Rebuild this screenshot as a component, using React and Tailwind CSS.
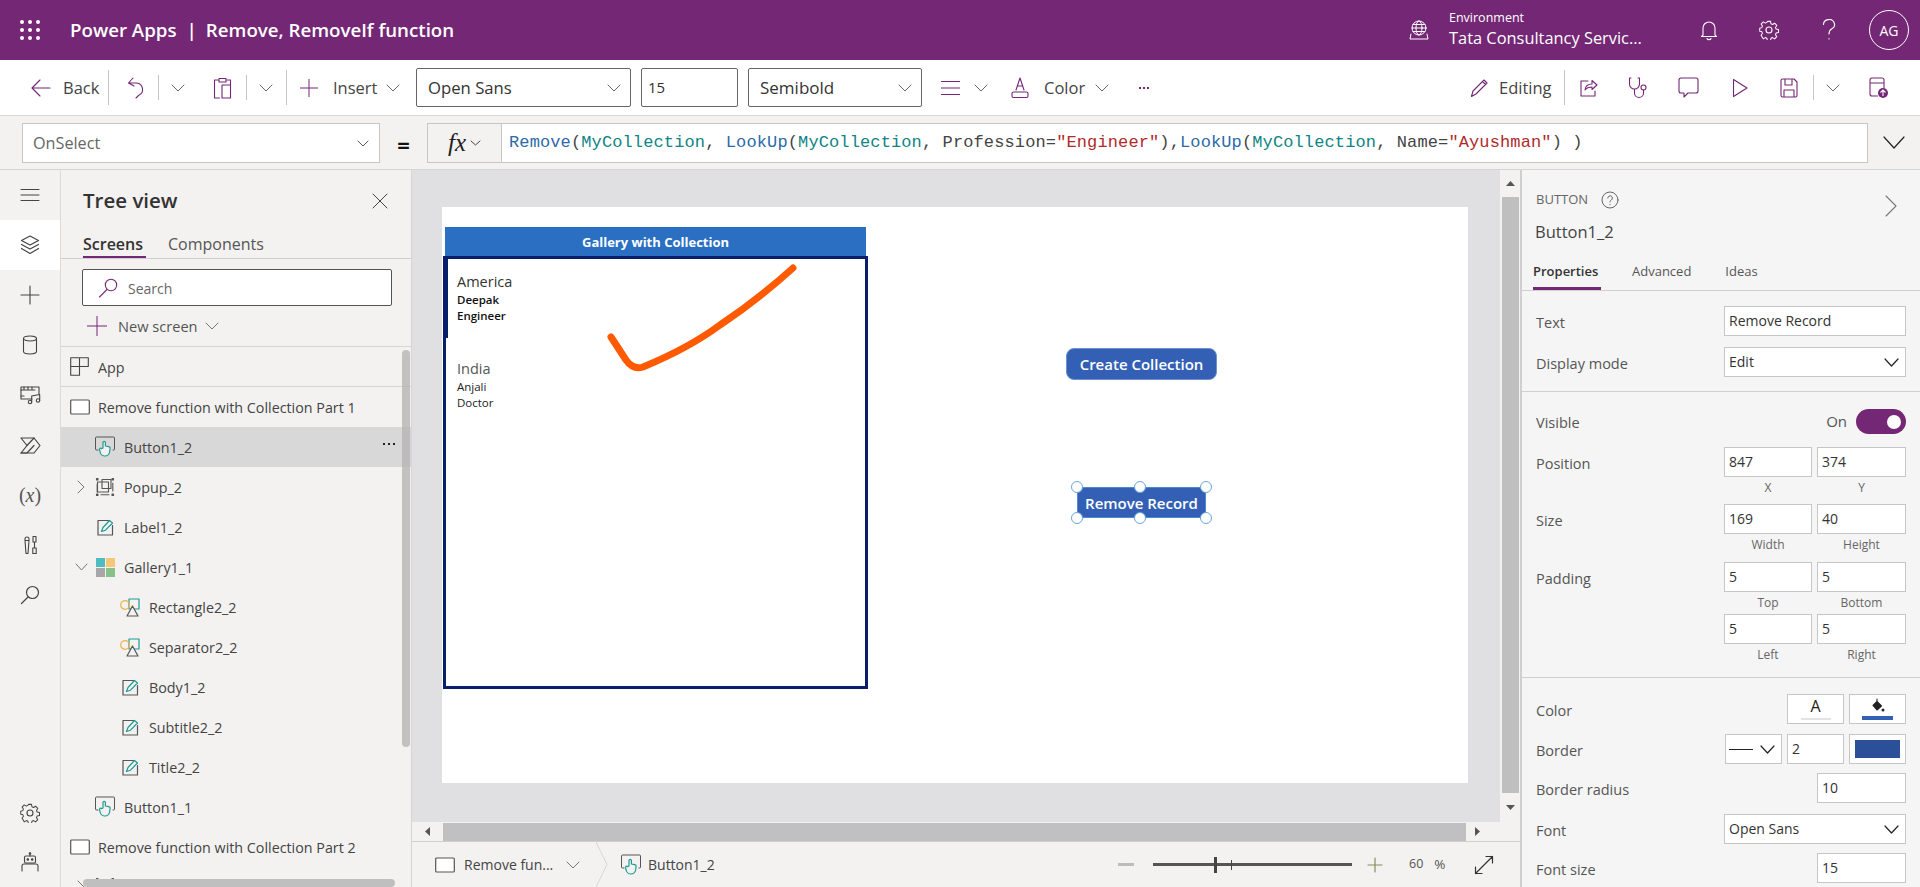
import React from "react";

const P = "#742774";

function S({ w = 20, h = 20, vb, c = P, sw = 1.3, children, className = "" }) {
  return (
    <svg width={w} height={h} viewBox={vb || `0 0 ${w} ${h}`} fill="none" stroke={c} strokeWidth={sw} strokeLinecap="round" strokeLinejoin="round" className={"shrink-0 " + className}>
      {children}
    </svg>
  );
}
const Chev = ({ w = 14, h = 8, c = "#666", sw = 1, className = "" }) => (
  <S w={w} h={h} c={c} sw={sw} className={className}><path d={`M1 1 L${w / 2} ${h - 1} L${w - 1} 1`} /></S>
);
const Sep = ({ h, cls }) => <div className={"w-px shrink-0 bg-[#c8c6c4] " + h + " " + (cls || "")} />;

const ScreenIco = ({ className = "" }) => (
  <S w={20} h={16} c="#555" sw={1.2} className={className}><rect x="0.7" y="1" width="18.6" height="14" rx="1" fill="#fff" /></S>
);
const BtnIco = ({ className = "" }) => (
  <S w={20} h={22} c="#555" sw={1} className={className}>
    <path d="M3 14H1.500a1 1 0 0 1-1-1V2a1 1 0 0 1 1-1h17a1 1 0 0 1 1 1v11a1 1 0 0 1-1 1H18" />
    <path d="M8 12V6.500a1.200 1.200 0 0 1 2.400 0V10l3.400.6c1 .2 1.400 1 1.300 1.900l-.5 3.500a5 5 0 0 1-5.200 4 5 5 0 0 1-4.300-4l-.6-2.600a1.100 1.100 0 0 1 2-.8Z" stroke="#1e9a94" strokeWidth="1.200" fill="#f3f2f1" />
  </S>
);
const PopupIco = () => (
  <S w={20} h={20} c="#555" sw={1.1}>
    <rect x="1.500" y="1.500" width="1.500" height="1.500" fill="#555" /><rect x="17" y="1.500" width="1.500" height="1.500" fill="#555" />
    <rect x="1.500" y="17" width="1.500" height="1.500" fill="#555" /><rect x="17" y="17" width="1.500" height="1.500" fill="#555" />
    <rect x="2.500" y="5" width="11" height="10" /><rect x="7" y="2.500" width="9" height="9" />
    <path d="M2.200 7v8M17.800 6v8M6 17.800h8" />
  </S>
);
const LabelIco = () => (
  <S w={17} h={17} c="#555" sw={1.2}>
    <path d="M11.500 1.500H1v14.500h14.500V6.500" />
    <path d="M4.500 12.500 6 8.500 12.500 1.500 15.500 4 8.500 11.200Z" stroke="#1e9a94" strokeWidth="1.200" fill="#f3f2f1" />
  </S>
);
const GalleryIco = () => (
  <svg width="19" height="19" viewBox="0 0 19 19" className="shrink-0">
    <rect width="9" height="9" fill="#4fbcc0" /><rect x="10" width="9" height="9" fill="#f8c678" />
    <rect y="10" width="9" height="9" fill="#a8a6a6" /><rect x="10" y="10" width="9" height="9" fill="#84c28a" />
  </svg>
);
const ShapeIco = () => (
  <S w={20} h={19} c="#555" sw={1.2}>
    <rect x="9" y="1" width="10" height="10" stroke="#1e9a94" />
    <circle cx="5" cy="7" r="4.300" stroke="#eeb04a" />
    <path d="M7 18 12.500 8 18 18Z" fill="#f3f2f1" />
  </S>
);

function Row({ children, pl, active, more }) {
  return (
    <div className={"flex h-[40px] items-center text-[14.300px] text-[#444] " + pl + " " + (active ? "bg-[#d9d8d8]" : "")}>
      {children}
      {more && <span className="ml-auto mr-[16px] mb-[6px] flex gap-[3px]"><i className="size-[2px] bg-[#222]" /><i className="size-[2px] bg-[#222]" /><i className="size-[2px] bg-[#222]" /></span>}
    </div>
  );
}
const RowText = ({ children, ml }) => <span className={"whitespace-nowrap pt-[2px] " + ml}>{children}</span>;

const GearPath = "M8.300 1h3.400l.5 2.600 1.700.8 2.300-1.400 2.300 2.400-1.400 2.200.7 1.700 2.600.6v3.200l-2.600.6-.7 1.700 1.400 2.200-2.300 2.400-2.300-1.400-1.700.8-.5 2.500H8.300l-.5-2.500-1.700-.8-2.300 1.400L1.500 16l1.400-2.200-.7-1.700L0 11.600V8.400l2.200-.6.7-1.700L1.500 3.900 3.800 1.500 6.100 2.900l1.700-.8Z";

function Rail() {
  const c = "#444";
  const items = [
    <S w={20} h={14} c={c} sw={1}><path d="M1 1.500h18M1 7h18M1 12.500h18" /></S>,
    <S w={20} h={20} c={c} sw={1.2}><path d="M10 1 18.500 5.500 10 10 1.500 5.500Z" /><path d="M1.500 9.500 10 14l8.500-4.500M1.500 13.500 10 18.500l8.500-5" /></S>,
    <S w={20} h={20} c={c} sw={1.1}><path d="M10 1v18M1 10h18" /></S>,
    <S w={16} h={20} c={c} sw={1.1}><ellipse cx="8" cy="3.500" rx="6.500" ry="2.500" /><path d="M1.500 3.500v13c0 1.400 2.900 2.500 6.500 2.500s6.500-1.100 6.500-2.500v-13" /></S>,
    <S w={21} h={20} c={c} sw={1.1}><path d="M12 14H1V2h18v7" /><path d="M1 5h14M4 2v3M8 2v3M12 2v3M1 11h3" /><circle cx="10" cy="17" r="1.700" /><circle cx="18" cy="15.500" r="1.700" /><path d="M11.700 17v-6l8-1.500v6" /></S>,
    <S w={21} h={17} c={c} sw={1.2}><path d="M1 1h13l6 7.500-6 7.500H1l6-7.500Z" /><path d="M7 8.500 14 1M1 16h6l7-7.500" /></S>,
    <span className="font-['Liberation_Serif',serif] text-[20px] font-normal leading-none text-[#555]">(<span className="italic">x</span>)</span>,
    <S w={13} h={20} c={c} sw={1.1}><path d="M1 4a2 2 0 0 1 4 0v1.500H1ZM1 5.500l1 13h2l1-13M9 1.500h3V7H9ZM10.500 7v6M8.800 13h3.400v5.500H8.800Z" /></S>,
    <S w={20} h={20} c={c} sw={1.2}><circle cx="12.500" cy="7.500" r="6" /><path d="M8 12 1.500 18.500" /></S>,
  ];
  return (
    <div className="flex w-[61px] shrink-0 flex-col border-r border-[#dcdbda] bg-[#f3f2f1]">
      {items.map((it, i) => (
        <div key={i} className={"flex h-[50px] items-center justify-center " + (i === 1 ? "bg-white" : "")}>{it}</div>
      ))}
      <div className="mt-auto flex h-[50px] items-center justify-center">
        <S w={20} h={20} c={c} sw={1.1}><circle cx="10" cy="10" r="3" /><path d={GearPath} transform="scale(.92) translate(.8 .5)" /></S>
      </div>
      <div className="flex h-[49px] items-center justify-center pb-[2px]">
        <S w={18} h={20} c={c} sw={1.1}><path d="M9 1v3" /><circle cx="9" cy="1.500" r=".8" /><rect x="3.500" y="4" width="11" height="7" rx="1.500" /><circle cx="6.800" cy="7.500" r=".8" fill={c} /><circle cx="11.200" cy="7.500" r=".8" fill={c} /><path d="M1 19v-5a2 2 0 0 1 2-2h12a2 2 0 0 1 2 2v5" /></S>
      </div>
    </div>
  );
}

function Tree() {
  return (
    <div className="relative w-[351px] shrink-0 overflow-hidden border-r border-[#d6d5d4] bg-[#f3f2f1]">
      <div className="flex h-[62px] items-center justify-between pl-[22px] pr-[23px]">
        <span className="pb-[1px] text-[20.500px] font-semibold text-[#333]">Tree view</span>
        <S w={16} h={16} c="#444" sw={1}><path d="M1 1l14 14M15 1 1 15" /></S>
      </div>
      <div className="flex h-[27px] items-start border-b border-[#d0cfce] pl-[22px] text-[16px] leading-[24px]">
        <div className="h-[26px] w-[63px] border-b-[2px] border-[#742774] font-semibold text-[#333]">Screens</div>
        <div className="ml-[22px] text-[#555]">Components</div>
      </div>
      <div className="ml-[21px] mt-[10px] flex h-[37px] w-[310px] items-center rounded-[2px] border border-[#555] bg-white pl-[15px]">
        <S w={20} h={20} c={P} sw={1.1}><circle cx="13" cy="7" r="5.700" /><path d="M9 11.500 1.500 19" /></S>
        <span className="ml-[10px] pt-[1px] text-[14px] text-[#666]">Search</span>
      </div>
      <div className="flex h-[41px] items-center border-b border-[#d6d5d4] pl-[26px]">
        <S w={20} h={20} c={P} sw={1}><path d="M10 0v20M0 10h20" /></S>
        <span className="ml-[11px] pt-[1px] text-[14.600px] text-[#555]">New screen</span>
        <Chev c="#777" className="ml-[7px]" />
      </div>
      <div className="flex h-[40px] items-center border-b border-[#d6d5d4] pl-[9px] text-[14.300px] text-[#444]">
        <S w={19} h={19} c="#444" sw={1.1}><path d="M.7.700h8.800v8.800H.7ZM9.500.700h8.800v8.800H9.500M.7 9.500v8.800h8.800V9.500" /></S>
        <span className="ml-[9px] pt-[2px]">App</span>
      </div>
      <Row pl="pl-[9px]"><ScreenIco /><RowText ml="ml-[8px]">Remove function with Collection Part 1</RowText></Row>
      <Row pl="pl-[34px]" active more><BtnIco /><RowText ml="ml-[9px]">Button1_2</RowText></Row>
      <Row pl="pl-[16px]"><S w={8} h={14} c="#777" sw={1}><path d="M1 1l6 6-6 6" /></S><span className="ml-[10px]"><PopupIco /></span><RowText ml="ml-[9px]">Popup_2</RowText></Row>
      <Row pl="pl-[36px]"><LabelIco /><RowText ml="ml-[10px]">Label1_2</RowText></Row>
      <Row pl="pl-[14px]"><Chev c="#777" w={13} /><span className="ml-[8px]"><GalleryIco /></span><RowText ml="ml-[9px]">Gallery1_1</RowText></Row>
      <Row pl="pl-[59px]"><ShapeIco /><RowText ml="ml-[9px]">Rectangle2_2</RowText></Row>
      <Row pl="pl-[59px]"><ShapeIco /><RowText ml="ml-[9px]">Separator2_2</RowText></Row>
      <Row pl="pl-[61px]"><LabelIco /><RowText ml="ml-[10px]">Body1_2</RowText></Row>
      <Row pl="pl-[61px]"><LabelIco /><RowText ml="ml-[10px]">Subtitle2_2</RowText></Row>
      <Row pl="pl-[61px]"><LabelIco /><RowText ml="ml-[10px]">Title2_2</RowText></Row>
      <Row pl="pl-[34px]"><BtnIco /><RowText ml="ml-[9px]">Button1_1</RowText></Row>
      <Row pl="pl-[9px]"><ScreenIco /><RowText ml="ml-[8px]">Remove function with Collection Part 2</RowText></Row>
      <Row pl="pl-[16px]"><S w={8} h={14} c="#777" sw={1}><path d="M1 1l6 6-6 6" /></S><span className="ml-[10px]"><PopupIco /></span><RowText ml="ml-[9px]">Popup</RowText></Row>
      <div className="absolute left-[341px] top-[180px] h-[397px] w-[8px] rounded-[4px] bg-[#b5b4b4]/80" />
      <div className="absolute left-[22px] top-[709px] h-[8px] w-[312px] rounded-[4px] bg-[#c0bfc0]" />
    </div>
  );
}

const Handle = ({ cls }) => <span className={"absolute size-[12px] rounded-full border-[1.500px] border-[#6aa5dc] bg-white " + cls} />;

function Canvas() {
  return (
    <div className="flex-1 bg-[#e0dfe1] pl-[30px] pt-[37px]">
      <div className="relative h-[576px] w-[1026px] bg-white">
        <div className="absolute left-[3px] top-[20px] flex h-[30px] w-[421px] items-center justify-center bg-[#2a6fc2] pt-[1px] text-[13px] font-bold text-white">Gallery with Collection</div>
        <div className="absolute left-[1px] top-[49px] h-[433px] w-[425px] border-[3px] border-[#0a1f6b] pl-[11px] pt-[13px]">
          <div className="absolute -left-[1px] top-0 h-[79px] w-[3px] bg-[#0a1f6b]" />
          <div className="text-[14.500px] leading-[20px] text-[#333]">America</div>
          <div className="text-[11.500px] font-semibold leading-[16px] text-[#111]">Deepak</div>
          <div className="text-[11.500px] font-semibold leading-[16px] text-[#111]">Engineer</div>
          <div className="mt-[35px] text-[14.500px] leading-[20px] text-[#555]">India</div>
          <div className="text-[11.500px] leading-[16px] text-[#222]">Anjali</div>
          <div className="text-[11.500px] leading-[16px] text-[#222]">Doctor</div>
        </div>
        <svg className="absolute left-[160px] top-[50px]" width="200" height="120" viewBox="0 0 200 120" fill="none">
          <path d="M9 80 L24 103 Q31 113 41 110 C70 98 95 85 118 68 C145 50 170 30 191 11" stroke="#ff5a00" strokeWidth="7" strokeLinecap="round" strokeLinejoin="round" />
        </svg>
        <div className="absolute left-[624px] top-[141px] flex h-[32px] w-[151px] items-center justify-center rounded-[8px] border border-[#6d92cf] bg-[#3360b5] pt-[1px] text-[15px] font-semibold text-white">Create Collection</div>
        <div className="absolute left-[635px] top-[280px] flex h-[31px] w-[129px] items-center justify-center border-[1.500px] border-[#4b88d4] bg-[#3360b5] pt-[1px] text-[15px] font-semibold text-white">
          Remove Record
          <Handle cls="-left-[7px] -top-[7px]" /><Handle cls="left-[56px] -top-[7px]" /><Handle cls="-right-[7px] -top-[7px]" />
          <Handle cls="-left-[7px] -bottom-[7px]" /><Handle cls="left-[56px] -bottom-[7px]" /><Handle cls="-right-[7px] -bottom-[7px]" />
        </div>
      </div>
    </div>
  );
}

const Box = ({ w, v, chev, cls = "" }) => (
  <div className={"flex h-[30px] items-center justify-between border border-[#c8c6c4] bg-white pl-[4px] pr-[6px] text-[14px] leading-none text-[#333] " + w + " " + cls}>
    <span>{v}</span>
    {chev && <Chev w={15} h={9} c="#222" sw={1.2} />}
  </div>
);
const Lbl = ({ children }) => <span className="pt-[3px] text-[14.500px] text-[#555]">{children}</span>;
const Cap = ({ w, children }) => <div className={"pt-[1px] text-center text-[12px] leading-[19px] text-[#666] " + w}>{children}</div>;
const PRow = ({ label, mt, children }) => (
  <div className={"flex items-center justify-between " + (mt || "")}>
    <Lbl>{label}</Lbl>
    <div className="flex gap-[5px]">{children}</div>
  </div>
);

function Props() {
  return (
    <div className="w-[400px] shrink-0 border-l-2 border-[#d0cfce] bg-[#f5f5f5]">
      <div className="flex items-start justify-between pl-[14px] pr-[23px] pt-[20px]">
        <div>
          <div className="flex h-[20px] items-center text-[13px] text-[#666]">
            BUTTON
            <S w={18} h={18} c="#666" sw={1} className="ml-[13px]"><circle cx="9" cy="9" r="8" /><path d="M6.800 7a2.300 2.300 0 1 1 3.500 2c-.9.6-1.300 1-1.300 2M9 13.500v.2" /></S>
          </div>
          <div className="-ml-[1px] mt-[10px] text-[16.500px] leading-[24px] text-[#444]">Button1_2</div>
        </div>
        <S w={12} h={22} c="#777" sw={1.1} className="mt-[5px]"><path d="M1 1l10 10L1 21" /></S>
      </div>
      <div className="mt-[14px] flex h-[33px] items-start border-b border-[#d0cfce] pl-[11px] text-[13px] leading-[26px]">
        <div className="h-[32px] w-[68px] border-b-[3px] border-[#742774] font-semibold text-[#333]">Properties</div>
        <div className="ml-[31px] text-[#555]">Advanced</div>
        <div className="ml-[34px] text-[#555]">Ideas</div>
      </div>
      <div className="border-b border-[#d0cfce] pb-[14px] pl-[14px] pr-[14px] pt-[15px]">
        <PRow label="Text"><Box w="w-[182px]" v="Remove Record" /></PRow>
        <PRow label="Display mode" mt="mt-[11px]"><Box w="w-[182px]" v="Edit" chev /></PRow>
      </div>
      <div className="border-b border-[#d0cfce] pb-[13px] pl-[14px] pr-[14px] pt-[17px]">
        <div className="flex h-[25px] items-center justify-between">
          <Lbl>Visible</Lbl>
          <div className="flex items-center">
            <span className="text-[15px] text-[#555]">On</span>
            <div className="ml-[9px] flex h-[25px] w-[50px] items-center justify-end rounded-full bg-[#742774] pr-[5px]"><div className="size-[14px] rounded-full bg-white" /></div>
          </div>
        </div>
        <PRow label="Position" mt="mt-[13px]"><Box w="w-[88px]" v="847" /><Box w="w-[89px]" v="374" /></PRow>
        <div className="flex justify-end gap-[5px]"><Cap w="w-[88px]">X</Cap><Cap w="w-[89px]">Y</Cap></div>
        <PRow label="Size" mt="mt-[7px]"><Box w="w-[88px]" v="169" /><Box w="w-[89px]" v="40" /></PRow>
        <div className="flex justify-end gap-[5px]"><Cap w="w-[88px]">Width</Cap><Cap w="w-[89px]">Height</Cap></div>
        <PRow label="Padding" mt="mt-[8px]"><Box w="w-[88px]" v="5" /><Box w="w-[89px]" v="5" /></PRow>
        <div className="flex justify-end gap-[5px]"><Cap w="w-[88px]">Top</Cap><Cap w="w-[89px]">Bottom</Cap></div>
        <div className="mt-[2px] flex justify-end gap-[5px]"><Box w="w-[88px]" v="5" /><Box w="w-[89px]" v="5" /></div>
        <div className="flex justify-end gap-[5px]"><Cap w="w-[88px]">Left</Cap><Cap w="w-[89px]">Right</Cap></div>
      </div>
      <div className="pl-[14px] pr-[14px] pt-[16px]">
        <PRow label="Color">
          <div className="flex h-[30px] w-[57px] flex-col items-center border border-[#c8c6c4] bg-white">
            <span className="text-[16px] leading-[22px] text-[#222]">A</span>
            <span className="mt-[1px] h-[2px] w-[30px] bg-[#e4e3e3]" />
          </div>
          <div className="flex h-[30px] w-[57px] flex-col items-center border border-[#c8c6c4] bg-white">
            <S w={15} h={15} c="#222" sw={1.1} className="mt-[3px]"><path d="M7 1v3M3 7.500 7 3.500 11.500 8 7 12Z" fill="#222" /><circle cx="13" cy="12" r="1.500" fill="#222" stroke="none" /></S>
            <span className="mt-[3px] h-[4px] w-[31px] bg-[#3360b5]" />
          </div>
        </PRow>
        <PRow label="Border" mt="mt-[10px]">
          <div className="flex h-[30px] w-[57px] items-center justify-between border border-[#c8c6c4] bg-white pl-[3px] pr-[6px]">
            <span className="h-px w-[24px] bg-[#222]" /><Chev w={15} h={9} c="#222" sw={1.2} />
          </div>
          <Box w="w-[57px]" v="2" />
          <div className="flex h-[30px] w-[57px] items-center justify-center border border-[#c8c6c4] bg-white"><span className="h-[18px] w-[45px] bg-[#2b5097]" /></div>
        </PRow>
        <PRow label="Border radius" mt="mt-[9px]"><Box w="w-[89px]" v="10" /></PRow>
        <PRow label="Font" mt="mt-[11px]"><Box w="w-[182px]" v="Open Sans" chev /></PRow>
        <PRow label="Font size" mt="mt-[9px]"><Box w="w-[89px]" v="15" /></PRow>
      </div>
    </div>
  );
}

const Tri = ({ d }) => {
  const p = { u: "M0 5 4.500 0 9 5Z", d: "M0 0 4.500 5 9 0Z", l: "M5 0 0 4.500 5 9Z", r: "M0 0 5 4.500 0 9Z" }[d];
  const vert = d === "u" || d === "d";
  return <svg width={vert ? 9 : 5} height={vert ? 5 : 9} viewBox={vert ? "0 0 9 5" : "0 0 5 9"} className="shrink-0"><path d={p} fill="#555" /></svg>;
};

function Center() {
  return (
    <div className="flex w-[1108px] shrink-0 flex-col">
      <div className="flex h-[652px]">
        <Canvas />
        <div className="flex w-[20px] flex-col items-center bg-[#f3f2f1]">
          <div className="flex h-[27px] w-full items-center justify-center"><Tri d="u" /></div>
          <div className="h-[596px] w-[17px] bg-[#bfbfc0]" />
          <div className="flex h-[29px] w-full items-center justify-center"><Tri d="d" /></div>
        </div>
      </div>
      <div className="flex h-[20px] items-center border-b border-[#d0cfce] bg-[#f3f2f1]">
        <div className="flex w-[31px] justify-center"><Tri d="l" /></div>
        <div className="h-[18px] w-[1023px] bg-[#c0bfc2]" />
        <div className="flex w-[54px] justify-center pr-[32px]"><Tri d="r" /></div>
      </div>
      <div className="flex h-[45px] items-center bg-[#f3f2f1] text-[14px] text-[#444]">
        <ScreenIco className="ml-[23px]" />
        <span className="ml-[9px] w-[99px] whitespace-nowrap">Remove fun...</span>
        <Chev c="#777" className="ml-[3px]" />
        <svg width="12" height="45" viewBox="0 0 12 45" fill="none" className="ml-[16px] shrink-0"><path d="M0 0 11 22.500 0 45" stroke="#d6d5d4" /></svg>
        <BtnIco className="ml-[13px]" />
        <span className="ml-[7px] w-[71px]">Button1_2</span>
        <span className="ml-[399px] h-[3px] w-[16px] bg-[#bdbcbb]" />
        <div className="relative ml-[19px] flex h-[20px] w-[199px] items-center">
          <div className="h-[3px] w-full bg-[#555]" />
          <div className="absolute left-[61px] top-[2px] h-[16px] w-[3px] bg-[#444]" />
          <div className="absolute left-[78px] top-[5px] h-[10px] w-px bg-[#444]" />
        </div>
        <S w={16} h={16} c="#8a8a5c" sw={1.2} className="ml-[15px]"><path d="M8 1v14M1 8h14" /></S>
        <span className="ml-[26px] text-[12.500px] text-[#555]">60</span>
        <span className="ml-[11px] text-[13.500px] text-[#555]">%</span>
        <S w={20} h={20} c="#333" sw={1.2} className="ml-[29px]"><path d="M1.500 18.500 18.500 1.500M12 1.500h6.500V8M1.500 12v6.500H8" /></S>
      </div>
    </div>
  );
}

export default function App() {
  return (
    <div className="flex h-[887px] w-[1920px] flex-col overflow-hidden bg-white font-['Open_Sans',sans-serif]">
      <header className="flex h-[60px] shrink-0 items-center bg-[#742774] text-white">
        <svg width="20" height="20" viewBox="0 0 20 20" className="ml-[20px] shrink-0" fill="#fff">
          {[2, 10, 18].flatMap((y) => [2, 10, 18].map((x) => <circle key={x + "-" + y} cx={x} cy={y} r="2" />))}
        </svg>
        <span className="ml-[30px] pt-[1px] text-[18.700px] font-semibold">Power Apps</span>
        <span className="ml-[10px] pt-[1px] text-[18.700px] font-semibold">|</span>
        <span className="ml-[9px] pt-[1px] text-[18.700px] font-semibold">Remove, RemoveIf function</span>
        <S w={20} h={20} c="#fff" sw={1} className="ml-auto"><circle cx="10" cy="8" r="7" /><ellipse cx="10" cy="8" rx="3" ry="7" /><path d="M3 8h14M4 4.500h12M4 11.500h12M2 14l-1 5h18l-1-5" /></S>
        <div className="ml-[20px] w-[251px] leading-none">
          <div className="-mt-[2px] text-[12.500px] leading-[17px]">Environment</div>
          <div className="whitespace-nowrap text-[16.400px] leading-[23px]">Tata Consultancy Servic...</div>
        </div>
        <S w={18} h={21} c="#fff" sw={1.1}><path d="M3 15V8a6 6 0 0 1 12 0v7l1.500 1.500h-15ZM7 18.500c.5 1.500 3.500 1.500 4 0" /></S>
        <S w={20} h={20} c="#fff" sw={1.1} className="ml-[41px]"><circle cx="10" cy="10" r="3" /><path d={GearPath} transform="scale(.92) translate(.8 .5)" /></S>
        <S w={14} h={22} c="#fff" sw={1.1} className="ml-[43px]"><path d="M1.500 5.500a5.500 5 0 1 1 8 4.500c-2 1.200-2.500 2.500-2.500 5M7 19.500v.5" /></S>
        <div className="ml-[33px] mr-[11px] flex size-[40px] items-center justify-center rounded-full border border-white text-[14px]">AG</div>
      </header>

      <div className="flex h-[56px] shrink-0 items-center border-b border-[#d6d5d4] bg-white pl-[31px] pr-[32px] text-[16.500px] text-[#444]">
        <S w={20} h={18} sw={1.1}><path d="M19 9H1M9 1 1 9l8 8" /></S>
        <span className="ml-[12px] w-[45px] pt-[2px]">Back</span>
        <Sep h="h-[35px]" />
        <S w={18} h={22} sw={1.1} className="ml-[18px]"><path d="M6 1 1.500 6 7 9M1.500 6h8a6.500 6.500 0 0 1 2 12.500L9 21" /></S>
        <Sep h="h-[25px]" cls="ml-[13px] bg-[#888]" />
        <Chev className="ml-[12px]" />
        <S w={19} h={22} sw={1.1} className="ml-[28px]"><path d="M5 3H1.500v18h5M14 3h3.500v5M6 3V1.500h7V5H6ZM9 8h8.500v13H9Z" /></S>
        <Sep h="h-[25px]" cls="ml-[14px] bg-[#888]" />
        <Chev className="ml-[12px]" />
        <Sep h="h-[35px]" cls="ml-[13px]" />
        <S w={18} h={18} sw={1} className="ml-[13px]"><path d="M9 0v18M0 9h18" /></S>
        <span className="ml-[15px] w-[50px] pt-[2px]">Insert</span>
        <Chev className="ml-[3px]" />
        <div className="ml-[16px] flex h-[39px] w-[215px] items-center justify-between rounded-[2px] border border-[#666] pl-[11px] pr-[9px] pt-[1px] text-[16.700px] text-[#333]">Open Sans<Chev /></div>
        <div className="ml-[10px] flex h-[39px] w-[97px] items-center rounded-[2px] border border-[#666] pl-[6px] text-[15px] text-[#333]">15</div>
        <div className="ml-[10px] flex h-[39px] w-[174px] items-center justify-between rounded-[2px] border border-[#666] pl-[11px] pr-[9px] pt-[1px] text-[17px] text-[#333]">Semibold<Chev /></div>
        <S w={19} h={16} sw={1} className="ml-[19px]"><path d="M0 1.500h19M0 8h19M0 14.500h19" /></S>
        <Chev className="ml-[14px]" />
        <S w={18} h={21} sw={1.1} className="ml-[23px]"><path d="M5 13 9 1l4 12M6.500 9h5" /><rect x="1" y="15" width="16" height="5.500" rx="1.500" /></S>
        <span className="ml-[15px] w-[50px] pt-[2px]">Color</span>
        <Chev className="ml-[1px]" />
        <span className="ml-[30px] flex w-[12px] gap-[2px]"><i className="size-[2px] bg-[#742774]" /><i className="size-[2px] bg-[#742774]" /><i className="size-[2px] bg-[#742774]" /></span>
        <S w={18} h={20} sw={1.1} className="ml-auto"><path d="M1.500 18.500 3 13 14 2l3 3L6 16ZM12.500 3.500l3 3" /></S>
        <span className="ml-[11px] w-[65px] pt-[2px]">Editing</span>
        <Sep h="h-[35px]" />
        <S w={18} h={19} sw={1.1} className="ml-[15px]"><path d="M8 3H1v15h14v-5" /><path d="M5 12c.5-4 3.500-6 7-6V2.500L17 7l-5 4.500V9c-3 0-5.500 1-7 3Z" /></S>
        <S w={20} h={22} sw={1.1} className="ml-[30px]"><path d="M3 1H1.500v6a5 5 0 0 0 10 0V1H10M6.500 12v4a4.500 4.500 0 0 0 9 0v-3" /><circle cx="15.500" cy="10.500" r="2.500" /></S>
        <S w={21} h={21} sw={1.1} className="ml-[30px]"><path d="M3 1h15a2 2 0 0 1 2 2v11a2 2 0 0 1-2 2H10l-4 4v-4H3a2 2 0 0 1-2-2V3a2 2 0 0 1 2-2Z" /></S>
        <S w={16} h={20} sw={1.1} className="ml-[33px]"><path d="M1.500 1.500 15 10 1.500 18.500Z" /></S>
        <S w={18} h={20} sw={1.1} className="ml-[32px]"><path d="M1 2.500A1.500 1.500 0 0 1 2.500 1H14l3 3v13.500a1.500 1.500 0 0 1-1.500 1.500h-13A1.500 1.500 0 0 1 1 17.500ZM5 1v6h7V1M4 19v-7h10v7" /></S>
        <Sep h="h-[25px]" cls="ml-[15px] bg-[#888]" />
        <Chev className="ml-[12px]" />
        <svg width="19" height="22" viewBox="0 0 19 22" fill="none" className="ml-[29px] shrink-0">
          <path d="M9 19H3a2 2 0 0 1-2-2V3a2 2 0 0 1 2-2h10a2 2 0 0 1 2 2v8M1 6h14" stroke={P} strokeWidth="1.100" />
          <circle cx="14" cy="16" r="5" fill={P} /><path d="M14 19v-6M11.500 15.500 14 13l2.500 2.500" stroke="#fff" strokeWidth="1.100" />
        </svg>
      </div>

      <div className="flex h-[54px] shrink-0 items-center border-b border-[#d6d5d4] bg-[#f3f2f1] pl-[22px]">
        <div className="flex h-[40px] w-[358px] items-center justify-between border border-[#c8c6c4] bg-white pl-[10px] pr-[10px] pt-[1px] text-[16.200px] text-[#666]">OnSelect<Chev w={12} h={7} c="#555" /></div>
        <div className="flex w-[47px] justify-center pt-[2px] text-[22px] font-bold leading-none text-[#111]">=</div>
        <div className="flex h-[40px] w-[75px] items-center justify-center border border-[#c8c6c4] font-['Liberation_Serif',serif] text-[25px] italic text-[#222]">fx<Chev w={11} h={6} c="#444" className="ml-[4px]" /></div>
        <div className="flex h-[40px] w-[1366px] items-center whitespace-pre border border-l-0 border-[#c8c6c4] bg-white pl-[7px] font-['Liberation_Mono',monospace] text-[17px] tracking-[0.12px] text-[#444]">
          <span className="text-[#2c6aa8]">Remove</span>(<span className="text-[#0f8484]">MyCollection</span>, <span className="text-[#2c6aa8]">LookUp</span>(<span className="text-[#0f8484]">MyCollection</span>, Profession=<span className="text-[#b02a2a]">"Engineer"</span>),<span className="text-[#2c6aa8]">LookUp</span>(<span className="text-[#0f8484]">MyCollection</span>, Name=<span className="text-[#b02a2a]">"Ayushman"</span>) )
        </div>
        <div className="flex flex-1 justify-center"><Chev w={22} h={13} c="#222" sw={1.2} /></div>
      </div>

      <div className="flex min-h-0 flex-1">
        <Rail />
        <Tree />
        <Center />
        <Props />
      </div>
    </div>
  );
}
